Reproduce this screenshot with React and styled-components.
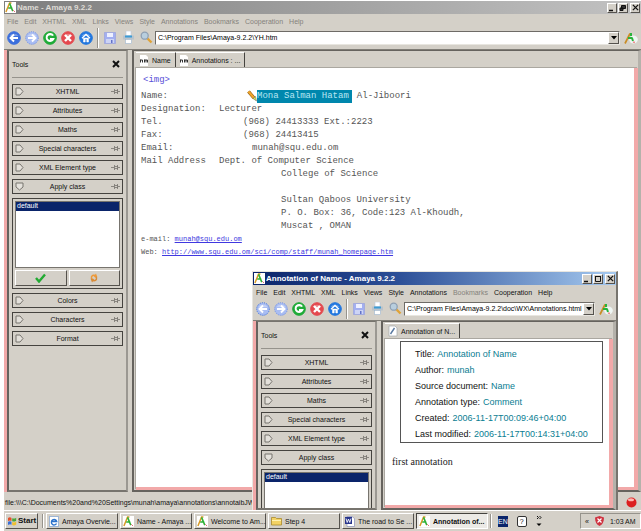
import React from "react";
import styled, { createGlobalStyle, css } from "styled-components";

const face = "#d4d0c8";
const pink = "#f2a9a9";
const ui = '"Liberation Sans", sans-serif';

const Global = createGlobalStyle`
  * { box-sizing: border-box; }
  html, body { margin: 0; background: #fff; }
  body { font: 7px/9px ${ui}; color: #111; overflow: hidden; }
  button, input, select { font: inherit; color: inherit; margin: 0; padding: 0; border: 0; border-radius: 0; background: none; }
  svg { display: block; flex: none; }
`;

const raised = css`
  background: ${face};
  border: 1px solid;
  border-color: #fff #55524d #55524d #fff;
`;

const Desktop = styled.div`
  position: relative;
  display: grid;
  grid-template-rows: minmax(0, 1fr) 21px;
  height: 100vh;
  padding: 1px 0 0 4px;
`;

const Frame = styled.section`
  display: flex;
  flex-direction: column;
  min-width: 0;
  min-height: 0;
  background: ${face};
`;

const Floating = styled(Frame)`
  position: absolute;
  left: 252px;
  right: 23px;
  top: 271px;
  bottom: 21px;
  overflow: hidden;
  border: solid;
  border-width: 1px 2px 0 1px;
  border-color: #e8e6e0 #77746e #77746e #e8e6e0;
`;

const TitleBar = styled.header`
  display: flex;
  align-items: center;
  flex: none;
  height: 13px;
  padding: 0 1px;
  gap: 1px;
  font: bold 8px/12px ${ui};
  color: ${(p) => (p.$active ? "#fff" : "#dedbd5")};
  background: ${(p) =>
    p.$active
      ? "linear-gradient(90deg, #0a246a, #2c4f97 40%, #a6caf0)"
      : "linear-gradient(90deg, #7e7e7e, #c2c2c2)"};
  h1 { flex: 1; margin: 0; font: inherit; white-space: nowrap; }
`;

const WinButton = styled.button`
  ${raised}
  display: grid;
  place-items: center;
  width: 10px;
  height: 10px;
  margin-left: ${(p) => (p.$apart ? "1px" : "0")};
`;

const MenuBar = styled.nav`
  display: flex;
  align-items: center;
  flex: none;
  height: 14px;
  padding-left: 3px;
  gap: 6px;
`;

const MenuItem = styled.button`
  color: ${(p) => (p.$dim ? "#85827c" : "#111")};
  white-space: nowrap;
`;

const ToolBar = styled.div`
  display: flex;
  align-items: center;
  flex: none;
  height: 22px;
  padding: 0 3px 2px 1px;
  border-bottom: 1px solid #807d76;
`;

const ToolButton = styled.button`
  display: grid;
  place-items: center;
  flex: none;
  width: 18px;
  height: 16px;
`;

const Divider = styled.span`
  flex: none;
  width: 2px;
  height: ${(p) => p.$h}px;
  margin: 0 ${(p) => p.$gap || 0}px;
  border-left: 1px solid #96938c;
  border-right: 1px solid #fff;
`;

const Address = styled.div`
  display: flex;
  flex: 1;
  min-width: 0;
  height: 14px;
  background: #fff;
  border: 1px solid;
  border-color: #6e6b66 #e8e6e0 #e8e6e0 #6e6b66;
  input { flex: 1; min-width: 0; padding-left: 2px; outline: 0; color: #000; }
`;

const DropButton = styled.button`
  ${raised}
  display: grid;
  place-items: center;
  width: 11px;
`;

const LogoSlot = styled.span`
  padding-left: 4px;
`;

const Body = styled.div`
  display: flex;
  flex: 1;
  min-height: 0;
  border-left: 3px solid ${pink};
`;

const Panel = styled.aside`
  flex: none;
  width: 121px;
  padding: 0 3px;
  border: 2px solid;
  border-color: #77746e #9b9892 #77746e #66635e;
  border-top-width: 1px;
  overflow: hidden;
`;

const PanelHead = styled.div`
  display: flex;
  align-items: center;
  justify-content: space-between;
  height: 27px;
  padding-right: 3px;
  border-bottom: 1px solid #96938c;
  margin-bottom: 6px;
  h2 { margin: 0; font: inherit; }
`;

const Section = styled.button`
  display: flex;
  align-items: center;
  justify-content: space-between;
  width: 100%;
  height: 15px;
  margin-bottom: 4px;
  padding: 0 2px;
  border: 1px solid #45433f;
`;

const ClassBox = styled.div`
  padding: 2px;
  margin-bottom: 4px;
  border: 1px solid #45433f;
`;

const ClassList = styled.select`
  display: block;
  width: 100%;
  height: 67px;
  background: #fff;
  border: 1px solid #77746e;
  outline: 0;
  overflow: hidden;
  scrollbar-width: none;
  option { padding: 0 1px; min-height: 9px; line-height: 9px; }
  option:checked { background: #0a246a linear-gradient(#0a246a, #0a246a); color: #fff; -webkit-text-fill-color: #fff; }
`;

const ButtonPair = styled.div`
  display: grid;
  grid-template-columns: 1fr 1fr;
  gap: 2px;
  margin-top: 2px;
  button { ${raised} display: grid; place-items: center; height: 16px; }
`;

const DocPane = styled.main`
  display: flex;
  flex-direction: column;
  flex: 1;
  min-width: 0;
  margin-left: 4px;
  padding-left: 2px;
  border: solid #66635e;
  border-width: 1px 3px 2px 2px;
  border-right-color: #b5b2ab;
`;

const Tabs = styled.div`
  display: flex;
  flex: none;
  height: 17px;
  padding-top: 1px;
`;

const Tab = styled.button`
  display: flex;
  align-items: center;
  gap: 3px;
  height: 15px;
  padding: 0 4px 0 3px;
  border-right: 1px solid #45433f;
  border-top: 1px solid #fff;
  white-space: nowrap;
`;

const Page = styled.div`
  flex: 1;
  min-height: 0;
  overflow: hidden;
  background: #fff;
  border: solid ${pink};
  border-width: 0 4px 3px 0;
  box-shadow: -1px -1px 0 #aaa7a0;
`;

const Profile = styled.article`
  padding: 6px 5px;
  font: 9px/13px "Liberation Mono", monospace;
  color: #555;
  white-space: pre;
`;

const ImgTag = styled.div`
  padding-left: 2px;
  color: #5a4fd8;
  font-size: 9px;
  margin-bottom: 3px;
`;

const Line = styled.div`
  display: grid;
  grid-template-columns: 78px 1fr;
  min-height: 13px;
`;

const Value = styled.span`
  display: flex;
  padding-left: ${(p) => p.$indent || 0}px;
  mark { background: #0087ad; color: #b9e6f2; margin-right: 5px; padding-right: 3px; }
`;

const Contact = styled.div`
  font-size: 7px;
  a { color: #4038e0; }
`;

const Note = styled.article`
  padding: 2px 6px 0 7px;
  font: 10px/14px "Liberation Serif", serif;
  color: #222;
  p { margin: 12px 0 0; }
`;

const NoteCard = styled.dl`
  margin: 0 0 0 8px;
  padding: 4px 14px 0;
  border: 1px solid #555;
  font: 9px/16px ${ui};
  div { display: flex; gap: 3px; white-space: nowrap; }
  dt { color: #111; }
  dd { margin: 0; color: #0a7d92; }
`;

const Status = styled.footer`
  display: flex;
  align-items: center;
  justify-content: space-between;
  flex: none;
  height: 18px;
  padding: 2px 4px 0 1px;
  white-space: nowrap;
  overflow: hidden;
`;

const TaskBar = styled.footer`
  display: flex;
  align-items: center;
  gap: 2px;
  min-width: 0;
  padding-left: 1px;
  background: ${face};
  border-top: 1px solid #fff;
`;

const Start = styled.button`
  ${raised}
  display: flex;
  align-items: center;
  gap: 1px;
  height: 16px;
  width: 33px;
  padding: 0 1px;
  font: bold 8px/12px ${ui};
  margin-right: 2px;
`;

const Task = styled.button`
  ${raised}
  display: flex;
  align-items: center;
  flex: 0 1 72px;
  min-width: 0;
  height: 16px;
  gap: 3px;
  padding: 0 2px;
  white-space: nowrap;
  ${(p) =>
    p.$on &&
    css`
      font-weight: bold;
      background: #eceae6;
      border-color: #45433f #fff #fff #45433f;
    `}
`;

const Lang = styled.span`
  padding: 1px 0;
  margin: 0 4px;
  color: #fff;
  background: #0a246a;
`;

const HelpBox = styled.button`
  width: 10px;
  height: 11px;
  margin: 0 7px 0 3px;
  border: 1px solid #333;
  border-radius: 2px;
  background: #fff;
  line-height: 9px;
`;

const Tray = styled.div`
  display: flex;
  align-items: center;
  gap: 6px;
  height: 16px;
  width: 61px;
  margin-left: auto;
  padding-left: 4px;
  white-space: nowrap;
  border: 1px solid;
  border-color: #96938c #fff #fff #96938c;
`;

/* ---------- drawings ---------- */

const Amaya = () => (
  <svg width="11" height="11" viewBox="0 0 12 12">
    <rect width="12" height="12" fill="#fff" />
    <path d="M1 11 5 1l2 0" fill="none" stroke="#d79a25" strokeWidth="1.6" />
    <path d="M5 1.5 8.500 10M3.500 6.500H8" fill="none" stroke="#2eb135" strokeWidth="1.700" />
    <path d="m9 9 2 2" stroke="#e2606b" />
  </svg>
);

const AmayaLarge = () => (
  <svg width="14" height="14" viewBox="0 0 14 14">
    <ellipse cx="9.500" cy="8.500" rx="4.300" ry="4" fill="#eef6f4" />
    <path d="M1 12.500 6 2.500" stroke="#c98c24" strokeWidth="1.700" />
    <path d="M4 7h4.500M7 2v3M8 7l1 3" stroke="#28b43c" strokeWidth="2" fill="none" />
    <path d="m9 11 2 .5" stroke="#f08b8b" strokeWidth="1.500" />
  </svg>
);

const Orb = ({ hue, soft, children }) => (
  <svg width="14" height="14" viewBox="0 0 14 14">
    <circle cx="7" cy="7" r="6.300" fill={soft ? "#a9bdf2" : hue} stroke={hue} strokeWidth="1" strokeDasharray={soft ? "1 1" : "none"} />
    <path d="M2.500 5a5 4 0 0 1 9 0" fill="#fff" opacity=".3" />
    <g fill="none" stroke="#fff" strokeWidth="1.900">{children}</g>
  </svg>
);

const Back = ({ soft }) => <Orb hue="#3c6fdc" soft={soft}><path d="M11 7H4M7 3.500 3.500 7 7 10.500" /></Orb>;
const Forward = () => <Orb hue="#6f8fe6" soft><path d="M3 7h7M7 3.500 10.500 7 7 10.500" /></Orb>;
const Reload = () => <Orb hue="#1fab38"><path d="M10 4.500A3.500 3.500 0 1 0 10.300 8H7" /></Orb>;
const Stop = () => <Orb hue="#e4494f"><path d="m4 4 6 6M10 4l-6 6" strokeWidth="2.400" /></Orb>;
const Home = () => <Orb hue="#2277df"><path d="M4.500 7v4h1.700V8h1.600v3h1.700V7z" fill="#fff" strokeWidth=".5" /><path d="M3 7.200 7 3.500l4 3.700" strokeWidth="1.300" /></Orb>;

const Save = () => (
  <svg width="12" height="12" viewBox="0 0 12 12">
    <rect x=".5" y=".5" width="11" height="11" fill="#a3aff0" stroke="#8d96dc" strokeDasharray="1 1" />
    <rect x="3" y="1" width="6" height="4" fill="#eef0ff" />
    <rect x="2" y="7" width="8" height="4" fill="#cdd4f5" />
    <rect x="7" y="8" width="1.500" height="3" fill="#6473c8" />
  </svg>
);

const Print = () => (
  <svg width="13" height="13" viewBox="0 0 13 13">
    <rect x="4" y="0" width="5" height="5" fill="#fff" stroke="#b8c7dd" strokeWidth=".6" />
    <rect x="1" y="4.500" width="11" height="4" fill="#b9c3cc" />
    <rect x="3" y="4.500" width="7" height="2" fill="#3b9bd5" />
    <rect x="3.500" y="8.500" width="6" height="4" fill="#fff" stroke="#9bb5cf" strokeWidth=".6" />
  </svg>
);

const Find = () => (
  <svg width="13" height="13" viewBox="0 0 13 13">
    <path d="m7 7 4.500 4.500" stroke="#e0a338" strokeWidth="2.400" />
    <circle cx="4.700" cy="4.700" r="3.500" fill="#b8cede" stroke="#8fa0b3" strokeWidth="1.300" />
  </svg>
);

const Arrow = () => <svg width="6" height="4" viewBox="0 0 6 4"><path d="M0 0h6L3 3.500z" /></svg>;

const Cross = ({ s = 8, w = 2 }) => (
  <svg width={s} height={s} viewBox="0 0 8 8"><path d="m1 1 6 6M7 1 1 7" stroke="#111" strokeWidth={w} /></svg>
);

const Marker = ({ open }) => (
  <svg width="9" height="9" viewBox="0 0 9 9">
    <path d={open ? "M1 1h7v4L4.500 8 1 5z" : "M1 1h4l3 3.500L5 8H1z"} fill="#e4e1db" stroke="#77746e" />
  </svg>
);

const Pin = () => (
  <svg width="9" height="7" viewBox="0 0 9 7" fill="none" stroke="#77746e">
    <path d="M0 3.500h3M3.500 1v5M3.500 2.500H7M3.500 4.500H7M6.500 1v5M7 3.500h2" strokeWidth=".8" />
  </svg>
);

const PageIcon = () => (
  <svg width="10" height="11" viewBox="0 0 10 11">
    <path d="M1 0h6l2 2v9H1z" fill="#fff" />
    <path d="M1.500 7.500v-3M1.500 5h2v2.500M5.500 7.500v-3M5.500 5h1.500v2.500M7 5h1.500v2.500" stroke="#333" fill="none" />
  </svg>
);

const NoteIcon = () => (
  <svg width="10" height="12" viewBox="0 0 10 12">
    <path d="M1 1h6l2 2v8H1z" fill="#fff" stroke="#a5a9ae" strokeWidth=".7" />
    <path d="M2.500 9 6.500 3" stroke="#5878a0" strokeWidth="1.400" />
  </svg>
);

const Pencil = () => (
  <svg width="10" height="12" viewBox="0 0 10 12">
    <path d="M1.500 1.500 7 8" stroke="#8a5a10" strokeWidth="3.400" />
    <path d="M1.500 1.500 7 8" stroke="#f0a42a" strokeWidth="2.200" />
    <path d="m6 8.500 2.500-2L9.500 11z" fill="#d8e85a" stroke="#555" strokeWidth=".5" />
  </svg>
);

const Tick = () => <svg width="11" height="10" viewBox="0 0 11 10"><path d="m1 5 3 3.500L10 1.500" fill="none" stroke="#22aa33" strokeWidth="2.400" /></svg>;

const Refresh = () => (
  <svg width="10" height="10" viewBox="0 0 10 10">
    <path d="M2.500 6.500C.5 3.500 3 .8 6 1.800L7 .5 8.500 4.500 4.500 4l1-1C3.500 2.500 2.500 4.500 3.800 6z" fill="#ee9a3a" />
    <path d="M7.500 3.500c2 3-.5 5.700-3.500 4.700L3 9.500 1.500 5.500 5.500 6l-1 1c2 .5 3-1.500 1.700-3z" fill="#d98a35" />
  </svg>
);

const Flag = () => (
  <svg width="10" height="10" viewBox="0 0 10 10">
    <path d="M1 2q2-1.500 3.500 0v3Q3 4 1 5z" fill="#e2502c" />
    <path d="M5.200 2.200q2 1 4-.5v3q-2 1.500-4 .5z" fill="#4aa83a" />
    <path d="M1 5.800Q3 4.600 4.500 5.800v3Q3 7.800 1 9z" fill="#3a6fd8" />
    <path d="M5.200 6q2 1 4-.5v3q-2 1.500-4 .5z" fill="#f0bf2e" />
  </svg>
);

const Explorer = () => (
  <svg width="10" height="11" viewBox="0 0 10 11">
    <rect x="0.500" y=".5" width="9" height="10" fill="#fff" stroke="#9db6d6" />
    <path d="M7.500 7.500A2.700 2.700 0 1 1 7.700 5.500H2.500" fill="none" stroke="#2a72cc" strokeWidth="1.400" />
  </svg>
);

const Folder = () => (
  <svg width="11" height="10" viewBox="0 0 11 10">
    <path d="M.5 1.500h4l1 1h5v6.500H.5z" fill="#f3d264" stroke="#a98a2c" strokeWidth=".8" />
    <path d="M1 4.500h9" stroke="#fff1b0" />
  </svg>
);

const Word = () => (
  <svg width="10" height="11" viewBox="0 0 10 11">
    <path d="M2 .5h5l2.500 2v8H2z" fill="#fff" stroke="#8891b8" strokeWidth=".7" />
    <rect y="1" width="7" height="7" fill="#27348c" />
    <path d="m1 2.500 1.200 4L3.500 3l1.300 3.500L6 2.500" stroke="#fff" fill="none" strokeWidth=".9" />
  </svg>
);

const Ball = () => (
  <svg width="11" height="11" viewBox="0 0 11 11">
    <circle cx="5.500" cy="5.500" r="5" fill="#dc2020" />
    <ellipse cx="5" cy="2.800" rx="3" ry="1.500" fill="#ffb5b0" />
  </svg>
);

const Shield = () => (
  <svg width="9" height="10" viewBox="0 0 9 10">
    <path d="M4.500 0 9 1.500C9 6 7.500 8.500 4.500 10 1.500 8.500 0 6 0 1.500z" fill="#cf3341" />
    <path d="m2.500 2.500 4 4M6.500 2.500l-4 4" stroke="#fff" strokeWidth="1.200" />
  </svg>
);

const Chevrons = () => (
  <svg width="6" height="12" viewBox="0 0 6 12">
    <path d="m1 1 1.500 1.500L1 4M3.500 1 5 2.500 3.500 4" fill="none" stroke="#111" />
    <path d="M.5 8.500h5L3 11z" />
  </svg>
);

const Minimize = () => <svg width="8" height="8" viewBox="0 0 8 8"><path d="M1 6.500h4" stroke="#111" strokeWidth="1.500" /></svg>;
const Maximize = () => <svg width="8" height="8" viewBox="0 0 8 8"><path d="M1 1.500h6M1.500 1v5.500h5V1" fill="none" stroke="#111" /></svg>;
const Restore = () => <svg width="8" height="8" viewBox="0 0 8 8"><path d="M2.500 1.500h4v3h-4zM1 4h3v2.500H1z" fill="#333" stroke="#111" /></svg>;

/* ---------- parts ---------- */

const menus = ["File", "Edit", "XHTML", "XML", "Links", "Views", "Style", "Annotations", "Bookmarks", "Cooperation", "Help"];
const sectionsTop = ["XHTML", "Attributes", "Maths", "Special characters", "XML Element type"];
const sectionsBottom = ["Colors", "Characters", "Format"];

function Chrome({ title, address, active }) {
  return (
    <>
      <TitleBar $active={active}>
        <Amaya />
        <h1>{title}</h1>
        <WinButton aria-label="Minimize"><Minimize /></WinButton>
        <WinButton aria-label={active ? "Maximize" : "Restore"}>{active ? <Maximize /> : <Restore />}</WinButton>
        <WinButton aria-label="Close" $apart><Cross s={7} w={1.5} /></WinButton>
      </TitleBar>
      <MenuBar aria-label={title}>
        {menus.map((m) => (
          <MenuItem key={m} $dim={!active || m === "Bookmarks"}>{m}</MenuItem>
        ))}
      </MenuBar>
      <ToolBar>
        <ToolButton aria-label="Back"><Back soft={active} /></ToolButton>
        <ToolButton aria-label="Forward"><Forward /></ToolButton>
        <ToolButton aria-label="Reload"><Reload /></ToolButton>
        <ToolButton aria-label="Stop"><Stop /></ToolButton>
        <ToolButton aria-label="Home"><Home /></ToolButton>
        <Divider $h={20} $gap={2} />
        <ToolButton aria-label="Save"><Save /></ToolButton>
        <ToolButton aria-label="Print"><Print /></ToolButton>
        <ToolButton aria-label="Find"><Find /></ToolButton>
        <Address>
          <input aria-label="Address" defaultValue={address} />
          <DropButton aria-label="Show addresses"><Arrow /></DropButton>
        </Address>
        <LogoSlot><AmayaLarge /></LogoSlot>
      </ToolBar>
    </>
  );
}

const SectionRow = ({ name, open }) => (
  <Section aria-expanded={!!open}>
    <Marker open={open} />
    <span>{name}</span>
    <Pin />
  </Section>
);

function Tools({ more = [] }) {
  return (
    <Panel>
      <PanelHead>
        <h2>Tools</h2>
        <button aria-label="Close tools"><Cross /></button>
      </PanelHead>
      {sectionsTop.map((s) => <SectionRow key={s} name={s} />)}
      <SectionRow name="Apply class" open />
      <ClassBox>
        <ClassList size={6} aria-label="Class" defaultValue="default">
          <option value="default">default</option>
        </ClassList>
        <ButtonPair>
          <button aria-label="Apply"><Tick /></button>
          <button aria-label="Refresh"><Refresh /></button>
        </ButtonPair>
      </ClassBox>
      {more.map((s) => <SectionRow key={s} name={s} />)}
    </Panel>
  );
}

const facts = [
  ["Designation:", "Lecturer", 0],
  ["Tel.", "(968) 24413333 Ext.:2223", 24],
  ["Fax:", "(968) 24413415", 24],
  ["Email:", "munah@squ.edu.om", 33],
  ["Mail Address", "Dept. of Computer Science", 0],
  ["", "College of Science", 62],
  ["", "", 62],
  ["", "Sultan Qaboos University", 62],
  ["", "P. O. Box: 36, Code:123 Al-Khoudh,", 62],
  ["", "Muscat , OMAN", 62],
];

const noteFacts = [
  ["Title:", "Annotation of Name"],
  ["Author:", "munah"],
  ["Source document:", "Name"],
  ["Annotation type:", "Comment"],
  ["Created:", "2006-11-17T00:09:46+04:00"],
  ["Last modified:", "2006-11-17T00:14:31+04:00"],
];

const tasks = [
  [Explorer, "Amaya Overvie..."],
  [Amaya, "Name - Amaya ..."],
  [Amaya, "Welcome to Am..."],
  [Folder, "Step 4"],
  [Word, "The road to Se ..."],
  [Amaya, "Annotation of...", true],
];

export default function App() {
  return (
    <Desktop>
      <Global />
      <Frame>
        <Chrome title="Name - Amaya 9.2.2" address="C:\Program Files\Amaya-9.2.2\YH.htm" />
        <Body>
          <Tools more={sectionsBottom} />
          <DocPane>
            <Tabs>
              <Tab><PageIcon />Name</Tab>
              <Tab><PageIcon />Annotations : ...</Tab>
            </Tabs>
            <Page>
              <Profile>
                <ImgTag>&lt;img&gt;</ImgTag>
                <Line>
                  <span>Name:</span>
                  <Value $indent={28}><Pencil /><mark>Mona Salman Hatam</mark>Al-Jiboori</Value>
                </Line>
                {facts.map(([k, v, indent], i) => (
                  <Line key={i}><span>{k}</span><Value $indent={indent}>{v}</Value></Line>
                ))}
                <Contact>e-mail: <a href="mailto:munah@squ.edu.om">munah@squ.edu.om</a></Contact>
                <Contact>Web: <a href="#homepage">http://www.squ.edu.om/sci/comp/staff/munah_homepage.htm</a></Contact>
              </Profile>
            </Page>
          </DocPane>
        </Body>
        <Status>
          <span>file:\\\C:\Documents%20and%20Settings\munah\amaya\annotations\annotaibJW</span>
          <Ball />
        </Status>
      </Frame>

      <Floating>
        <Chrome active title="Annotation of Name - Amaya 9.2.2" address="C:\Program Files\Amaya-9.2.2\doc\WX\Annotations.html" />
        <Body>
          <Tools />
          <DocPane>
            <Tabs>
              <Tab><NoteIcon />Annotation of N...</Tab>
            </Tabs>
            <Page>
              <Note>
                <NoteCard>
                  {noteFacts.map(([k, v]) => (
                    <div key={k}><dt>{k}</dt><dd>{v}</dd></div>
                  ))}
                </NoteCard>
                <p>first annotation</p>
              </Note>
            </Page>
          </DocPane>
        </Body>
      </Floating>

      <TaskBar>
        <Start><Flag />Start</Start>
        <Divider $h={14} />
        {tasks.map(([Icon, name, on]) => (
          <Task key={name} $on={on}><Icon />{name}</Task>
        ))}
        <Divider $h={14} />
        <Lang>EN</Lang>
        <HelpBox aria-label="Help">?</HelpBox>
        <Chevrons />
        <Tray><span>«</span><Shield /><time>1:03 AM</time></Tray>
      </TaskBar>
    </Desktop>
  );
}
